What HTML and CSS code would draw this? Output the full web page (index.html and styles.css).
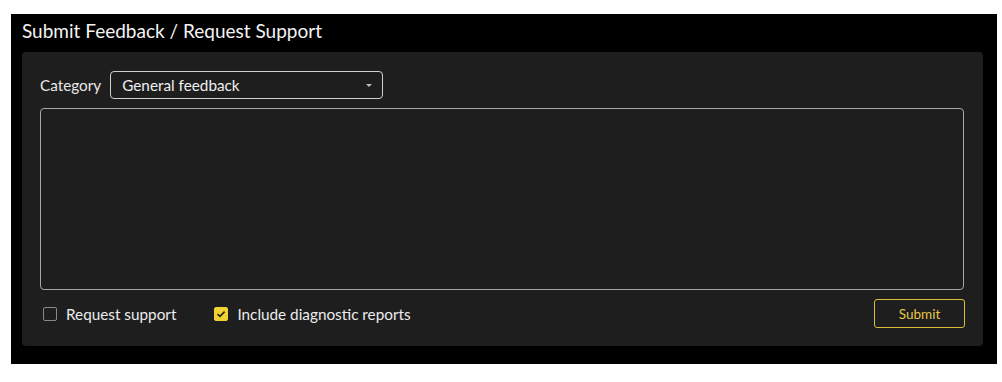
FILE: index.html
```html
<!DOCTYPE html>
<html lang="en">
<head>
    <meta charset="UTF-8">
    <title>Submit Feedback / Request Support</title>
    <link rel="stylesheet" href="styles.css">
</head>
<body>
    <div class="panel">
        <h1 class="title">Submit Feedback / Request Support</h1>
        <div class="card">
            <div class="category-row">
                <label class="category-label" for="category">Category</label>
                <div class="select">
                    <span>General feedback</span>
                    <span class="caret"></span>
                </div>
            </div>
            <textarea class="message"></textarea>
            <div class="footer">
                <label class="check">
                    <span class="box"></span>
                    Request support
                </label>
                <label class="check">
                    <span class="box checked">
                        <svg width="10" height="8" viewBox="0 0 10 8"><path d="M1.5 4.2 L4 6.4 L8.6 1.6" fill="none" stroke="#2a2410" stroke-width="1.6"/></svg>
                    </span>
                    Include diagnostic reports
                </label>
                <button class="submit">Submit</button>
            </div>
        </div>
    </div>
</body>
</html>
```

FILE: styles.css
```css
body {
    margin: 0;
    background-color: #ffffff;
    font-family: 'Lato', 'Open Sans', sans-serif;
    color: #f2f2f2;
}
.panel {
    background-color: #000000;
    margin: 14px 5px 0 11px;
    padding: 7px 11px 18px 11px;
    height: 325px;
}
.title {
    margin: 0 0 11px 0;
    font-size: 19px;
    font-weight: 400;
    line-height: 20px;
    color: #f4f4f4;
}
.card {
    background-color: #1e1e1e;
    border-radius: 4px;
    padding: 19px 18px 18px 18px;
    height: 257px;
    margin-right: 3px;
}
.category-row {
    display: flex;
    align-items: center;
    gap: 9px;
}
.category-label {
    font-size: 15.3px;
    color: #e8e8e8;
}
.select {
    width: 250px;
    height: 26px;
    border: 1px solid #cfcfcf;
    border-radius: 4px;
    display: flex;
    align-items: center;
    justify-content: space-between;
    padding: 0 10px 0 11px;
    font-size: 15.3px;
    color: #f0f0f0;
}
.caret {
    width: 0;
    height: 0;
    border-left: 3px solid transparent;
    border-right: 3px solid transparent;
    border-top: 3px solid #bbbbbb;
}
.message {
    display: block;
    box-sizing: border-box;
    width: 924px;
    height: 182px;
    margin-top: 9px;
    background: transparent;
    border: 1px solid #a8a8a8;
    border-radius: 4px;
    resize: none;
}
.footer {
    display: flex;
    align-items: center;
    margin-top: 9px;
    padding-left: 3px;
}
.check {
    display: flex;
    align-items: center;
    gap: 9px;
    font-size: 15.3px;
    color: #ececec;
    margin-right: 38px;
}
.box {
    box-sizing: border-box;
    width: 14px;
    height: 14px;
    border: 1.5px solid #8a8a8a;
    border-radius: 2px;
    display: flex;
    align-items: center;
    justify-content: center;
}
.box.checked {
    background-color: #f2d135;
    border-color: #f2d135;
}
.submit {
    margin-left: auto;
    width: 91px;
    height: 29px;
    background: transparent;
    border: 1px solid #d8bd3a;
    border-radius: 3px;
    color: #e6c84a;
    font-family: 'Lato', sans-serif;
    font-size: 13.5px;
    cursor: pointer;
}
```
